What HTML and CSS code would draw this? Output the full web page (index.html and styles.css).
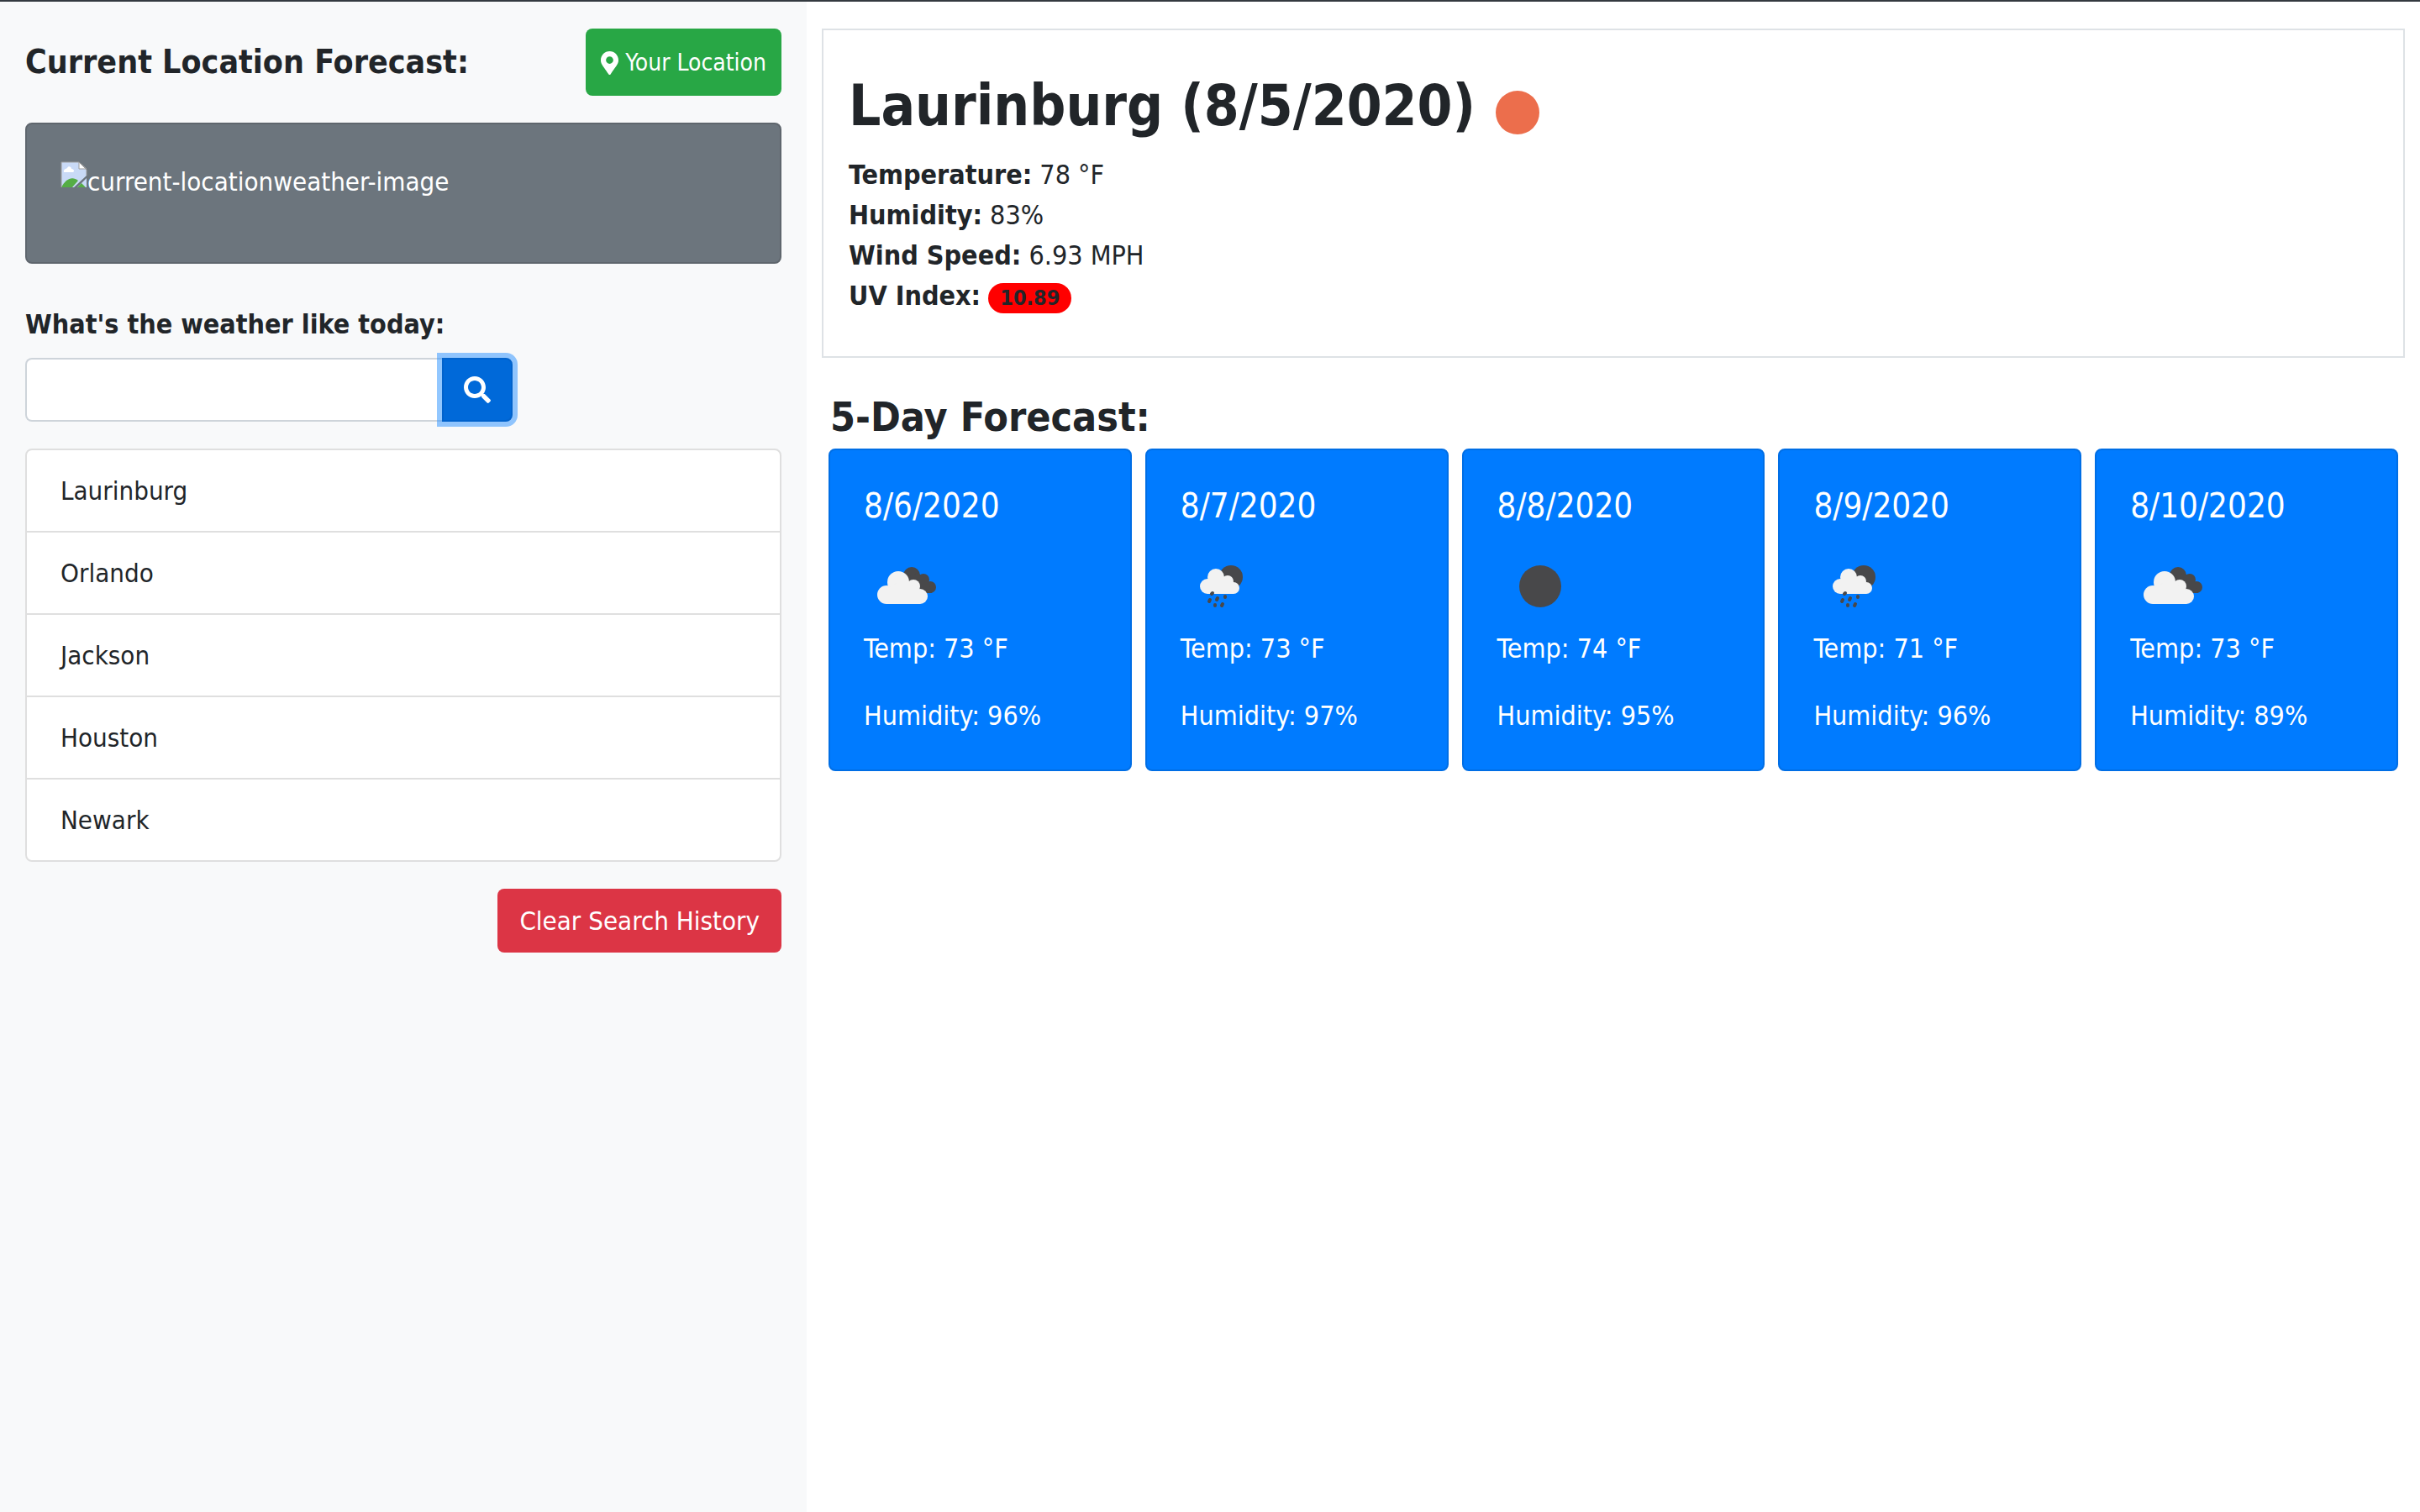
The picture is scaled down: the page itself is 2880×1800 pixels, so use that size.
FILE: index.html
```html
<!DOCTYPE html>
<html lang="en">
<head>
  <meta charset="utf-8">
  <meta name="viewport" content="width=device-width, initial-scale=1">
  <title>Weather Dashboard</title>
  <link rel="stylesheet" href="styles.css">
</head>
<body>
  <svg class="sprite" aria-hidden="true">
    <symbol id="clouds" viewBox="0 0 100 100">
      <g fill="#48484a"><circle cx="57" cy="37" r="10"/><circle cx="71" cy="42" r="7"/><circle cx="79" cy="51" r="7"/><path d="M47 40L57 49L74 58H81L76 42L64 34Z"/></g>
      <g fill="#f2f2f2"><circle cx="27" cy="60" r="11"/><circle cx="41" cy="45" r="13"/><circle cx="59" cy="50" r="8"/><circle cx="67" cy="62" r="9"/><path d="M27 53L41 45L58 50L67 62V71H27Z"/></g>
    </symbol>
    <symbol id="rain" viewBox="0 0 100 100">
      <circle cx="60" cy="39" r="14" fill="#48484a"/>
      <g fill="#f2f2f2"><circle cx="32" cy="50" r="9"/><circle cx="42" cy="39" r="10"/><circle cx="56" cy="44" r="7"/><circle cx="63" cy="52" r="7"/><path d="M32 43L42 38L56 43L63 50V59H32Z"/></g>
      <path d="M38 58L37 59M35 66L34 68M44 64L43 66M53 62L53 63M41 72L41 73M50 71L49 73" stroke="#48484a" stroke-width="4" stroke-linecap="round"/>
    </symbol>
    <symbol id="moon" viewBox="0 0 100 100">
      <circle cx="51" cy="50" r="25" fill="#48484a"/>
    </symbol>
  </svg>

  <div class="topbar"></div>
  <div class="layout">
    <aside class="sidebar">
      <header class="sidebar-header">
        <h2 class="sidebar-title">Current Location Forecast:</h2>
        <button class="btn btn-location" type="button">
          <svg class="icon-pin" viewBox="0 0 384 512" aria-hidden="true"><path fill="currentColor" d="M172.268 501.67C26.97 291.031 0 269.413 0 192 0 85.961 85.961 0 192 0s192 85.961 192 192c0 77.413-26.97 99.031-172.268 309.67-9.535 13.774-29.93 13.773-39.464 0zM192 272c44.183 0 80-35.817 80-80s-35.817-80-80-80-80 35.817-80 80 35.817 80 80 80z"/></svg>
          <span>Your Location</span>
        </button>
      </header>

      <section class="location-card">
        <svg class="icon-missing" viewBox="0 0 32 32" aria-hidden="true">
          <path d="M1 1H22L31 10V17L16 31H1Z" fill="#c9daf7"/>
          <path d="M31 20V31H20Z" fill="#c9daf7"/>
          <path d="M22 1V9H31Z" fill="#fff" stroke="#9a9a9a"/>
          <path d="M4 13C3 9 7 9 8 8C9 5 13 6 13 9C16 9 17 12 15 13Z" fill="#fff"/>
          <path d="M1 31C6 21 14 17 21 23L14 31ZM25 26L30 31H20Z" fill="#55ad45"/>
          <path d="M1 31V1H22L31 10V17" fill="none" stroke="#9a9a9a"/>
        </svg>
        <span>current-locationweather-image</span>
      </section>

      <form class="search">
        <label class="search-label" for="city">What's the weather like today:</label>
        <div class="search-group">
          <input class="search-input" id="city" type="text">
          <button class="btn-search" type="button" aria-label="Search">
            <svg class="icon-search" viewBox="0 0 512 512" aria-hidden="true"><path fill="currentColor" d="M505 442.7L405.3 343c-4.500-4.500-10.600-7-17-7H372c27.600-35.300 44-79.700 44-128C416 93.100 322.900 0 208 0S0 93.100 0 208s93.100 208 208 208c48.300 0 92.700-16.400 128-44v16.300c0 6.400 2.500 12.500 7 17l99.700 99.700c9.400 9.400 24.600 9.400 33.900 0l28.300-28.300c9.400-9.400 9.400-24.600.1-34zM208 336c-70.700 0-128-57.200-128-128 0-70.700 57.200-128 128-128 70.700 0 128 57.200 128 128 0 70.700-57.200 128-128 128z"/></svg>
          </button>
        </div>
      </form>

      <ul class="history">
        <li>Laurinburg</li>
        <li>Orlando</li>
        <li>Jackson</li>
        <li>Houston</li>
        <li>Newark</li>
      </ul>
      <button class="btn btn-clear" type="button">Clear Search History</button>
    </aside>

    <main class="main">
      <section class="current">
        <h1 class="city">Laurinburg (8/5/2020) <svg class="icon-sun" viewBox="0 0 52 52" aria-hidden="true"><circle cx="26" cy="26" r="26" fill="#ec6e4c"/></svg></h1>
        <p><strong>Temperature:</strong> 78 °F</p>
        <p><strong>Humidity:</strong> 83%</p>
        <p><strong>Wind Speed:</strong> 6.93 MPH</p>
        <p class="uv"><strong>UV Index:</strong> <span class="badge">10.89</span></p>
      </section>

      <section class="forecast">
        <h2 class="forecast-title">5-Day Forecast:</h2>
        <div class="cards">
          <article class="card"><h3>8/6/2020</h3><svg class="weather" aria-hidden="true"><use href="#clouds"/></svg><p>Temp: 73 °F</p><p>Humidity: 96%</p></article>
          <article class="card"><h3>8/7/2020</h3><svg class="weather" aria-hidden="true"><use href="#rain"/></svg><p>Temp: 73 °F</p><p>Humidity: 97%</p></article>
          <article class="card"><h3>8/8/2020</h3><svg class="weather" aria-hidden="true"><use href="#moon"/></svg><p>Temp: 74 °F</p><p>Humidity: 95%</p></article>
          <article class="card"><h3>8/9/2020</h3><svg class="weather" aria-hidden="true"><use href="#rain"/></svg><p>Temp: 71 °F</p><p>Humidity: 96%</p></article>
          <article class="card"><h3>8/10/2020</h3><svg class="weather" aria-hidden="true"><use href="#clouds"/></svg><p>Temp: 73 °F</p><p>Humidity: 89%</p></article>
        </div>
      </section>
    </main>
  </div>
</body>
</html>
```
FILE: styles.css
```css
*,
*::before,
*::after {
  box-sizing: border-box;
}

body {
  display: flex;
  flex-direction: column;
  min-height: 100vh;
  margin: 0;
  background: #fff;
  color: #212529;
  font: 31px/48px Tahoma, "DejaVu Sans Condensed", "DejaVu Sans", sans-serif;
}

h1, h2, h3, p, ul {
  margin: 0;
}

button, input {
  font: inherit;
}

svg {
  flex: none;
}

.sprite {
  position: absolute;
  width: 0;
  height: 0;
}

.topbar {
  height: 2px;
  background: #343a40;
}

.layout {
  flex: 1;
  display: grid;
  grid-template-columns: 1fr 2fr;
}

/* Sidebar */
.sidebar {
  display: flex;
  flex-direction: column;
  padding: 32px 30px;
  background: #f8f9fa;
}

.sidebar-header {
  display: flex;
  align-items: center;
  justify-content: space-between;
  margin-bottom: 32px;
}

.sidebar-title {
  font-size: 39px;
  line-height: 50px;
}

.btn {
  border: 0;
  border-radius: 8px;
  color: #fff;
}

.btn-location {
  display: flex;
  align-items: center;
  gap: 8px;
  padding: 17px 18px 15px;
  background: #28a745;
  font-size: 28px;
}

.icon-pin {
  width: 21px;
  height: 28px;
}

.location-card {
  display: flex;
  align-items: flex-start;
  margin-bottom: 48px;
  padding: 44px 40px 72px;
  border: 2px solid #5f666d;
  border-radius: 8px;
  background: #6c757d;
  color: #fff;
}

.icon-missing {
  width: 32px;
  height: 32px;
}

.search-label {
  display: block;
  margin-bottom: 16px;
  font-size: 32px;
  font-weight: bold;
}

.search-group {
  display: flex;
  width: 580px;
  margin-bottom: 32px;
}

.search-input {
  flex: 1;
  min-width: 0;
  height: 76px;
  padding: 12px 24px;
  border: 2px solid #ced4da;
  border-right: 0;
  border-radius: 8px 0 0 8px;
  background: #fff;
}

.btn-search {
  display: flex;
  align-items: center;
  justify-content: center;
  width: 84px;
  border: 2px solid #0062cc;
  border-radius: 0 8px 8px 0;
  background: #0069d9;
  box-shadow: 0 0 0 6px rgba(38, 143, 255, 0.5);
  color: #fff;
}

.icon-search {
  width: 32px;
  height: 32px;
}

.history {
  margin-bottom: 32px;
  padding: 0;
  border: 2px solid #dfdfdf;
  border-radius: 8px;
  background: #fff;
  list-style: none;
}

.history li {
  padding: 24px 40px;
}

.history li + li {
  border-top: 2px solid #dfdfdf;
}

.btn-clear {
  align-self: flex-end;
  padding: 14px 26px;
  background: #dc3545;
}

/* Main column */
.main {
  padding: 32px 18px;
  font-size: 32px;
}

.current {
  padding: 48px 30px;
  border: 2px solid #dee2e6;
}

.city {
  display: flex;
  align-items: center;
  gap: 24px;
  margin-bottom: 16px;
  font-size: 67px;
  line-height: 84px;
}

.icon-sun {
  width: 52px;
  height: 52px;
  margin-top: 16px;
}

.badge {
  display: inline-block;
  padding: 6px 14px;
  border-radius: 18px;
  background: #f00;
  font-size: 25px;
  font-weight: bold;
  line-height: 24px;
}

.forecast {
  padding: 40px 8px 0;
}

.forecast-title {
  margin-bottom: 8px;
  padding-left: 2px;
  font-size: 48px;
  line-height: 60px;
}

.cards {
  display: grid;
  grid-template-columns: repeat(5, 1fr);
  gap: 16px;
}

.card {
  padding: 40px;
  border: 2px solid #006ee5;
  border-radius: 8px;
  background: #007bff;
  color: #fff;
}

.card h3 {
  margin-bottom: 20px;
  font-size: 40px;
  font-weight: normal;
  line-height: 52px;
}

.card p + p {
  margin-top: 32px;
}

.weather {
  display: block;
  width: 100px;
  height: 100px;
}
```
